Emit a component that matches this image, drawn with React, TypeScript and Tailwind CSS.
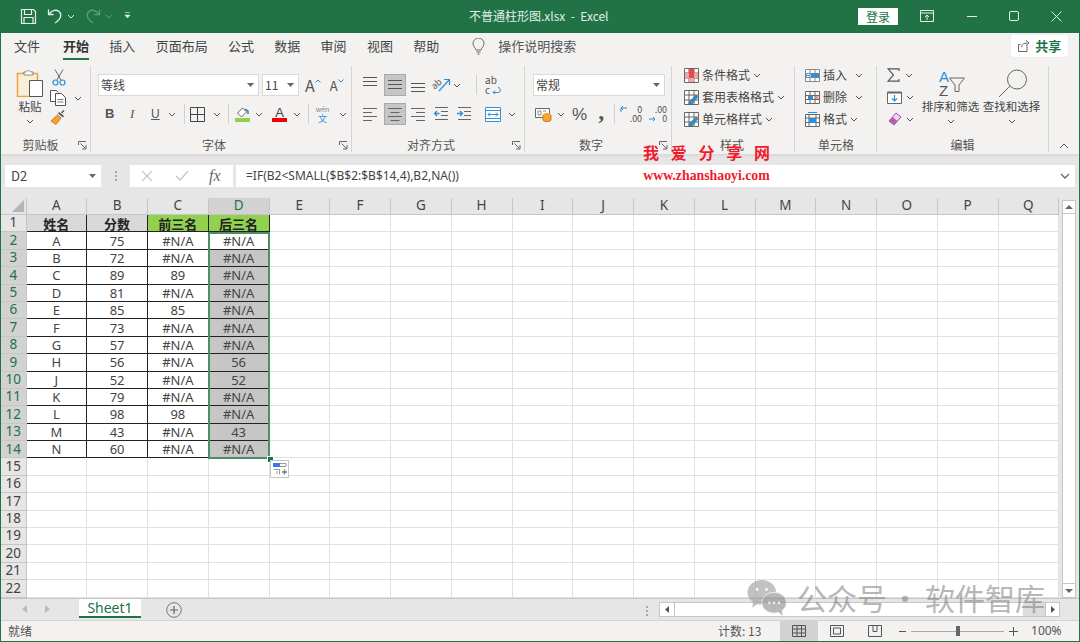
import type { ReactNode } from "react";

const cjk = "font-['Noto_Sans_CJK_SC',sans-serif]";

const columns = ["A", "B", "C", "D", "E", "F", "G", "H", "I", "J", "K", "L", "M", "N", "O", "P", "Q"];

const scores: string[][] = [
  ["A", "75", "#N/A", "#N/A"],
  ["B", "72", "#N/A", "#N/A"],
  ["C", "89", "89", "#N/A"],
  ["D", "81", "#N/A", "#N/A"],
  ["E", "85", "85", "#N/A"],
  ["F", "73", "#N/A", "#N/A"],
  ["G", "57", "#N/A", "#N/A"],
  ["H", "56", "#N/A", "56"],
  ["J", "52", "#N/A", "52"],
  ["K", "79", "#N/A", "#N/A"],
  ["L", "98", "98", "#N/A"],
  ["M", "43", "#N/A", "43"],
  ["N", "60", "#N/A", "#N/A"],
];

function Chevron({ className = "" }: { className?: string }) {
  return (
    <svg width="8" height="5" viewBox="0 0 8 5" className={`shrink-0 ${className}`}>
      <path d="M1 1l3 3 3-3" fill="none" stroke="#555" />
    </svg>
  );
}

function Caret() {
  return (
    <svg width="7" height="4" viewBox="0 0 7 4">
      <path d="M0 0h7L3.500 4z" fill="#666" />
    </svg>
  );
}

function Launcher() {
  return (
    <svg width="9" height="9" viewBox="0 0 9 9" className="shrink-0">
      <path d="M.5 4V.5H8M2.500 2.500l5 5M8 4v4H4" fill="none" stroke="#666" />
    </svg>
  );
}

function Sep({ className = "" }: { className?: string }) {
  return <div className={`w-px h-[20px] bg-[#d0d0d0] ${className}`} />;
}

function Group({ label, className, launcher, labelClass = "", children }: { label: string; className: string; launcher?: boolean; labelClass?: string; children: ReactNode }) {
  return (
    <div className={`h-[86px] shrink-0 flex flex-col border-r border-[#d4d4d4] ${className}`}>
      <div className="flex-1 min-h-0">{children}</div>
      <div className={`h-[14px] flex items-center justify-center relative text-[12px] leading-[14px] text-[#555] ${labelClass}`}>
        {label}
        {launcher && (
          <span className="absolute right-[3px] top-[3px] flex">
            <Launcher />
          </span>
        )}
      </div>
    </div>
  );
}

function Lines({ kind }: { kind: "left" | "center" | "right" }) {
  const rows = [3, 7, 11, 15];
  const long = 14;
  const short = 9;
  return (
    <svg width="16" height="18" viewBox="0 0 16 18" className="shrink-0">
      {rows.map((r, i) => {
        const w = i % 2 === 0 ? long : short;
        const x = kind === "left" ? 1 : kind === "right" ? 15 - w : 8 - w / 2;
        return <path key={r} d={`M${x} ${r + 0.5}h${w}`} stroke="#666" />;
      })}
    </svg>
  );
}

function VAlign({ top }: { top: number }) {
  return (
    <svg width="16" height="18" viewBox="0 0 16 18" className="shrink-0">
      {[0, 4, 8].map((d) => (
        <path key={d} d={`M1 ${top + d + 0.5}h14`} stroke="#555" />
      ))}
    </svg>
  );
}

function Indent({ flip }: { flip?: boolean }) {
  return (
    <svg width="16" height="16" viewBox="0 0 16 16" className="shrink-0">
      <path d="M2 1.500h13M8 5.500h7M8 9.500h7M2 13.500h13" stroke="#666" />
      <path d={flip ? "M1 7.500h5M4 5l2.500 2.500L4 10" : "M6.500 7.500h-5M4 5L1.500 7.500 4 10"} fill="none" stroke="#2b8fd8" strokeWidth="1.300" />
    </svg>
  );
}

function TitleBar() {
  return (
    <div className="h-[33px] shrink-0 bg-[#217346] flex items-center text-white pb-[1px]">
      <svg width="17" height="17" viewBox="0 0 17 17" className="ml-[19px]">
        <path d="M1.500 1.500h12l2 2v12h-14zM4.500 1.500v5h7v-5M4 15.500v-6h9v6" fill="none" stroke="#e4f0ea" strokeWidth="1.200" />
      </svg>
      <svg width="16" height="16" viewBox="0 0 16 16" className="ml-[10px]">
        <path d="M1.500 1.500v5h5M2 6.500C4 2.500 9 1 12 3.500S14.500 11 8 15" fill="none" stroke="#e4f0ea" strokeWidth="1.300" />
      </svg>
      <svg width="8" height="5" viewBox="0 0 8 5" className="ml-[4px]">
        <path d="M1 1l3 3 3-3" fill="none" stroke="#e4f0ea" />
      </svg>
      <svg width="16" height="16" viewBox="0 0 16 16" className="ml-[10px]">
        <path d="M14.500 1.500v5h-5M14 6.500C12 2.500 7 1 4 3.500S1.500 11 8 15" fill="none" stroke="#5f9c7d" strokeWidth="1.300" />
      </svg>
      <svg width="8" height="5" viewBox="0 0 8 5" className="ml-[4px]">
        <path d="M1 1l3 3 3-3" fill="none" stroke="#5f9c7d" />
      </svg>
      <svg width="7" height="8" viewBox="0 0 7 8" className="ml-[11px]">
        <path d="M1 .5h5M1 3h5L3.500 6z" fill="#e4f0ea" stroke="#e4f0ea" strokeWidth=".6" />
      </svg>
      <div className="ml-[338px] w-[140px] text-[12px] text-[#e1eee7] whitespace-pre">不普通柱形图.xlsx  -  Excel</div>
      <div className="ml-[249px] w-[40px] h-[17px] bg-white text-[#217346] text-[12px] leading-[17px] text-center">登录</div>
      <svg width="14" height="12" viewBox="0 0 14 12" className="ml-[22px]">
        <path d="M.5.500h13v11H.5zM1 3h12M7 10V5M5 7l2-2 2 2" fill="none" stroke="#e4f0ea" />
      </svg>
      <div className="ml-[33px] w-[10px] h-px bg-[#e4f0ea]" />
      <div className="ml-[32px] w-[10px] h-[10px] border border-[#e4f0ea] rounded-[2px]" />
      <svg width="11" height="11" viewBox="0 0 11 11" className="ml-[32px]">
        <path d="M.5.500l10 10M10.500.500l-10 10" stroke="#e4f0ea" />
      </svg>
    </div>
  );
}

function Tabs() {
  const rest = ["插入", "页面布局", "公式", "数据", "审阅", "视图", "帮助"];
  return (
    <div className="h-[29px] flex items-center text-[13px] text-[#444] pb-[3px]">
      <span className="ml-[13px]">文件</span>
      <span className="relative ml-[23px] font-bold text-[#333]">
        开始
        <span className="absolute left-0 right-0 top-[22px] h-[2px] bg-[#217346]" />
      </span>
      {rest.map((t) => (
        <span key={t} className="ml-[20.3px]">{t}</span>
      ))}
      <svg width="13" height="17" viewBox="0 0 13 17" className="ml-[33px]">
        <path d="M4 12c0-2-3-3-3-6.500a5.500 5.500 0 0 1 11 0c0 3.500-3 4.500-3 6.500zM4.500 14h4M5.500 16h2" fill="none" stroke="#666" />
      </svg>
      <span className="ml-[13px] text-[#555]">操作说明搜索</span>
      <div className="ml-[435px] w-[57px] h-[22px] bg-white rounded-[2px] flex items-center justify-center gap-[5px] shadow-[0_0_1px_#ccc]">
        <svg width="12" height="12" viewBox="0 0 12 12">
          <path d="M9 5.500v6H.500v-7h2M3.500 7c.5-3 3-4 6-4M8 .500l3 2.500-3 2.500" fill="none" stroke="#666" />
        </svg>
        <span className="text-[13px] font-bold text-[#217346]">共享</span>
      </div>
    </div>
  );
}

function ClipboardGroup() {
  return (
    <Group label="剪贴板" launcher className="w-[90px]" labelClass="pr-[10px]">
      <div className="flex">
        <div className="ml-[15px] w-[28px] flex flex-col items-center">
          <svg width="28" height="28" viewBox="0 0 28 28" className="mt-[3px] shrink-0">
            <path d="M1.500 4.500h6v-1h9v1h5v23h-20z" fill="#fbeed9" stroke="#eba33d" strokeWidth="1.500" />
            <path d="M8 5V3h2.500c.5-2 3.500-2 4 0H17v3H8z" fill="#fff" stroke="#888" />
            <path d="M13.500 11.500h13v16h-13z" fill="#fff" stroke="#555" />
          </svg>
          <div className="text-[11.5px] leading-[14px] mt-[2px] text-[#444] whitespace-nowrap">粘贴</div>
          <Chevron className="mt-[6px]" />
        </div>
        <div className="ml-[6px] flex flex-col">
          <svg width="14" height="17" viewBox="0 0 14 17" className="ml-[2px] mt-[3px]">
            <path d="M3 .500L9 11M11 .500L5 11" stroke="#666" fill="none" />
            <circle cx="3.500" cy="13.500" r="2.500" fill="none" stroke="#2b8fd8" strokeWidth="1.200" />
            <circle cx="10.500" cy="13.500" r="2.500" fill="none" stroke="#2b8fd8" strokeWidth="1.200" />
          </svg>
          <div className="flex items-center mt-[4px]">
            <svg width="17" height="16" viewBox="0 0 17 16">
              <path d="M5.500 11.500H.5v-11h6l1.500 2" fill="#fff" stroke="#555" />
              <path d="M5.500 3.500h6l4 4v8h-10z" fill="#fff" stroke="#555" />
              <path d="M7.500 9.500h6M7.500 12h6" stroke="#777" />
            </svg>
            <Chevron className="ml-[7px]" />
          </div>
          <svg width="16" height="16" viewBox="0 0 16 16" className="mt-[4px]">
            <path d="M9 2l5 4-1 1.500-5-4z" fill="#555" />
            <path d="M7.500 5l3.500 3L6 14.500 1 11z" fill="#f2a33a" stroke="#d6791a" />
            <path d="M11.500 3L14 .5" stroke="#555" strokeWidth="1.500" />
          </svg>
        </div>
      </div>
    </Group>
  );
}

function FontGroup() {
  return (
    <Group label="字体" launcher className="w-[261px]" labelClass="pr-[14px]">
      <div className="flex mt-[8px] h-[22px] ml-[7px]">
        <div className="w-[161px] bg-white border border-[#d9d9d9] flex items-center justify-between px-[2px] pr-[4px] text-[12px] text-[#444]">
          等线
          <Caret />
        </div>
        <div className="ml-[3px] w-[37px] bg-white border border-[#d9d9d9] flex items-center justify-between px-[2px] pr-[4px] text-[12px] text-[#444]">
          11
          <Caret />
        </div>
        <div className="ml-[6px] flex items-center text-[#555] text-[16px] leading-none">
          <span>A</span>
          <svg width="6" height="4" viewBox="0 0 6 4" className="-mt-[8px]"><path d="M.5 3.500L3 1l2.500 2.500" fill="none" stroke="#2b8fd8" /></svg>
          <span className="ml-[9px] text-[13px]">A</span>
          <svg width="6" height="4" viewBox="0 0 6 4" className="-mt-[8px]"><path d="M.5.500L3 3 5.500.5" fill="none" stroke="#2b8fd8" /></svg>
        </div>
      </div>
      <div className="flex items-center mt-[7px] h-[22px] text-[#555]">
        <span className="ml-[14px] w-[8px] text-[13px] font-bold font-['Liberation_Sans',sans-serif]">B</span>
        <span className="ml-[17px] w-[5px] text-[13px] italic font-['Liberation_Serif',serif]">I</span>
        <span className="ml-[16px] w-[8px] text-[12px] underline font-['Liberation_Sans',sans-serif]">U</span>
        <Chevron className="ml-[9px]" />
        <Sep className="ml-[8px]" />
        <svg width="15" height="15" viewBox="0 0 15 15" className="ml-[5px]">
          <path d="M.5.500h14v14H.5zM7.500 1v13M1 7.500h13" fill="none" stroke="#444" />
        </svg>
        <Chevron className="ml-[8px]" />
        <Sep className="ml-[7px]" />
        <div className="ml-[6px] w-[15px] flex flex-col items-center">
          <svg width="14" height="11" viewBox="0 0 14 11">
            <path d="M6.500 1L1.500 6l4 4 5-5z" fill="#fff" stroke="#666" />
            <path d="M9 2l3 2v3" fill="none" stroke="#1f6fb5" strokeWidth="1.400" />
          </svg>
          <div className="w-[15px] h-[4px] bg-[#92d050]" />
        </div>
        <Chevron className="ml-[5px]" />
        <div className="ml-[9px] w-[15px] flex flex-col items-center text-[13px] leading-[11px] text-[#444]">
          <span className="font-['Liberation_Sans',sans-serif] h-[11px]">A</span>
          <div className="w-[15px] h-[4px] bg-[#f00000]" />
        </div>
        <Chevron className="ml-[6px]" />
        <Sep className="ml-[7px]" />
        <div className="ml-[6px] w-[15px] flex flex-col items-center leading-[9px]">
          <span className="text-[7px] text-[#888]">wén</span>
          <span className="text-[9px] text-[#2b8fd8]">文</span>
        </div>
        <Chevron className="ml-[9px]" />
      </div>
    </Group>
  );
}

function AlignGroup() {
  return (
    <Group label="对齐方式" launcher className="w-[173px]" labelClass="pr-[14px]">
      <div className="flex items-center mt-[8px] h-[22px]">
        <div className="ml-[10px] w-[16px] flex"><VAlign top={1} /></div>
        <div className="ml-[6px] w-[22px] h-[22px] bg-[#c6c6c6] border border-[#aaa] flex items-center justify-center"><VAlign top={4} /></div>
        <div className="ml-[4px] w-[16px] flex"><VAlign top={7} /></div>
        <svg width="20" height="18" viewBox="0 0 20 18" className="ml-[5px] overflow-visible">
          <text x="1" y="11" fontSize="9" fill="#555" transform="rotate(-40 6 9)">ab</text>
          <path d="M8 15L18 4M13 3.500h5.500V9" fill="none" stroke="#2b8fd8" strokeWidth="1.200" />
        </svg>
        <Chevron className="ml-[2px]" />
        <Sep className="ml-[15px]" />
        <div className="ml-[8px] h-[20px] flex flex-col items-start text-[10px] leading-[10px] text-[#555]">
          <span>ab</span>
          <span className="flex items-center">
            c
            <svg width="11" height="8" viewBox="0 0 11 8">
              <path d="M3 6.500h5c3 0 3-5 0-5M3 6.500L5 4.500M3 6.500l2 1.500" fill="none" stroke="#2b8fd8" />
            </svg>
          </span>
        </div>
      </div>
      <div className="flex items-center mt-[7px] h-[22px]">
        <div className="ml-[10px] flex"><Lines kind="left" /></div>
        <div className="ml-[6px] w-[22px] h-[22px] bg-[#c6c6c6] border border-[#aaa] flex items-center justify-center"><Lines kind="center" /></div>
        <div className="ml-[4px] flex"><Lines kind="right" /></div>
        <div className="ml-[7px] flex"><Indent /></div>
        <div className="ml-[7px] flex"><Indent flip /></div>
        <svg width="16" height="15" viewBox="0 0 16 15" className="ml-[13px]">
          <path d="M.5.500h15v14H.5zM1 3.500h14M1 11.500h14" fill="#fff" stroke="#3a8fd0" />
          <path d="M3 7.500h10M5 5.500l-2 2 2 2M11 5.500l2 2-2 2" fill="none" stroke="#2b8fd8" />
        </svg>
        <Chevron className="ml-[7px]" />
      </div>
    </Group>
  );
}

function NumberGroup() {
  return (
    <Group label="数字" launcher className="w-[147px]" labelClass="pr-[14px]">
      <div className="ml-[8px] mt-[8px] w-[132px] h-[22px] bg-white border border-[#d9d9d9] flex items-center justify-between px-[2px] pr-[4px] text-[12px] text-[#444]">
        常规
        <Caret />
      </div>
      <div className="flex items-center mt-[7px] h-[22px] text-[#555]">
        <svg width="17" height="15" viewBox="0 0 17 15" className="ml-[10px]">
          <path d="M.5 1.500h14v9H.5z" fill="#fff" stroke="#666" />
          <path d="M3 4h3v4H3zM8 4h3" fill="none" stroke="#888" />
          <ellipse cx="12" cy="8" rx="4" ry="2" fill="#f2a33a" />
          <path d="M8 8v5c0 2 8 2 8 0V8" fill="#f2a33a" stroke="#d6791a" />
        </svg>
        <Chevron className="ml-[5px]" />
        <span className="ml-[7px] text-[17px] leading-none font-['Liberation_Sans',sans-serif]">%</span>
        <span className="ml-[11px] text-[24px] leading-none font-bold font-['Liberation_Serif',serif] -mt-[6px]">,</span>
        <Sep className="ml-[10px]" />
        <div className="ml-[5px] relative w-[22px] h-[18px] text-[9px] leading-[9px] text-[#555] text-right">
          <div>0</div>
          <div>.00</div>
          <svg width="8" height="8" viewBox="0 0 8 8" className="absolute left-0 top-0">
            <path d="M7 3H1M3 1L1 3l2 2M1 3v4" fill="none" stroke="#2b8fd8" />
          </svg>
        </div>
        <div className="ml-[3px] relative w-[22px] h-[18px] text-[9px] leading-[9px] text-[#555] text-right">
          <div>.00</div>
          <div>0</div>
          <svg width="8" height="8" viewBox="0 0 8 8" className="absolute left-[3px] bottom-0">
            <path d="M1 4h6M5 2l2 2-2 2" fill="none" stroke="#2b8fd8" />
          </svg>
        </div>
      </div>
    </Group>
  );
}

function TableIcon({ kind }: { kind: "cond" | "table" | "cell" }) {
  return (
    <svg width="15" height="15" viewBox="0 0 15 15" className="shrink-0">
      <path d="M.5.500h14v14H.5zM5 1v13M10 1v13M1 5h13M1 10h13" fill="#fff" stroke="#666" />
      {kind === "cond" ? (
        <>
          <path d="M5 1h5v4H5zM5 5h5v5H5z" fill="#e8484f" />
          <path d="M1 5h4v5H1zM10 5h4v5h-4zM5 10h5v4H5z" fill="#f5a3a6" />
        </>
      ) : (
        <path d="M5 12L12 5l2 2-6 7H5z" fill="#2b8fd8" stroke="#666" strokeWidth=".6" />
      )}
    </svg>
  );
}

function StylesGroup() {
  const rows: [string, "cond" | "table" | "cell"][] = [
    ["条件格式", "cond"],
    ["套用表格格式", "table"],
    ["单元格样式", "cell"],
  ];
  return (
    <Group label="样式" className="w-[123px]" labelClass="pr-[2px]">
      <div className="-mt-[1px] flex flex-col gap-[2px] pl-[12px]">
        {rows.map(([t, k]) => (
          <div key={t} className="h-[20px] flex items-center text-[12px] text-[#444]">
            <TableIcon kind={k} />
            <span className="ml-[3px]">{t}</span>
            <Chevron className="ml-[3px]" />
          </div>
        ))}
      </div>
    </Group>
  );
}

function CellsGroup() {
  return (
    <Group label="单元格" className="w-[82px]" labelClass="pl-[1px]">
      <div className="-mt-[1px] flex flex-col gap-[2px] pl-[10px] text-[12px] text-[#444]">
        <div className="h-[20px] flex items-center">
          <svg width="15" height="13" viewBox="0 0 15 13" className="shrink-0">
            <path d="M.5.500h14v12H.5zM5 1v11M10 1v11M1 4.500h13M1 8.500h13" fill="#fff" stroke="#888" />
            <path d="M6 4.500h8v4H6z" fill="#2b8fd8" />
            <path d="M5 6.500H0M2 4.500l-2 2 2 2" fill="none" stroke="#2b8fd8" />
          </svg>
          <span className="ml-[3px]">插入</span>
          <Chevron className="ml-[8px]" />
        </div>
        <div className="h-[20px] flex items-center">
          <svg width="15" height="13" viewBox="0 0 15 13" className="shrink-0">
            <path d="M.5.500h14v12H.5zM5 1v11M10 1v11M1 4.500h13M1 8.500h13" fill="#fff" stroke="#666" />
            <path d="M3 4.500h5v4H3z" fill="#2b8fd8" />
            <path d="M10 4.500l4 4M14 4.500l-4 4" stroke="#e8484f" />
          </svg>
          <span className="ml-[3px]">删除</span>
          <Chevron className="ml-[8px]" />
        </div>
        <div className="h-[20px] flex items-center">
          <svg width="15" height="15" viewBox="0 0 15 15" className="shrink-0">
            <path d="M.5 2.500h14v12H.5zM1 6h13M1 10.500h13M4 3v11M11 3v11" fill="#fff" stroke="#666" />
            <path d="M4 6h7v5H4z" fill="#2b8fd8" />
            <path d="M3 .500h9" stroke="#2b8fd8" />
          </svg>
          <span className="ml-[3px]">格式</span>
          <Chevron className="ml-[3px]" />
        </div>
      </div>
    </Group>
  );
}

function EditGroup() {
  return (
    <Group label="编辑" className="w-[172px]">
      <div className="flex">
        <div className="-mt-[1px] flex flex-col gap-[2px] pl-[10px] w-[43px]">
          <div className="h-[20px] flex items-center">
            <svg width="13" height="14" viewBox="0 0 13 14">
              <path d="M12 3V.800H1L6.500 7 1 13.200h11V11" fill="none" stroke="#555" strokeWidth="1.200" />
            </svg>
            <Chevron className="ml-[5px]" />
          </div>
          <div className="h-[20px] flex items-center">
            <svg width="15" height="13" viewBox="0 0 15 13">
              <path d="M.5 1h14v11.500H.5z" fill="#fff" stroke="#666" />
              <path d="M.5 1h14v1.500H.5z" fill="#666" />
              <path d="M7.500 4v6M5 7.500l2.500 2.500L10 7.500" fill="none" stroke="#2b8fd8" strokeWidth="1.200" />
            </svg>
            <Chevron className="ml-[4px]" />
          </div>
          <div className="h-[20px] flex items-center">
            <svg width="15" height="14" viewBox="0 0 15 14">
              <path d="M9 1l5 4-7 8-5-4z" fill="#f1d6ef" stroke="#a64ca6" />
              <path d="M2 9l3.500-4 5 4L7 13z" fill="#b35fb3" />
            </svg>
            <Chevron className="ml-[4px]" />
          </div>
        </div>
        <div className="w-[61px] flex flex-col items-center">
          <div className="h-[28px] mt-[4px] flex items-center text-[15px] leading-[14px] ml-[3px]">
            <div className="flex flex-col font-['Liberation_Sans',sans-serif]">
              <span className="text-[#2b8fd8]">A</span>
              <span className="text-[#555]">Z</span>
            </div>
            <svg width="16" height="17" viewBox="0 0 16 17" className="mt-[1px]">
              <path d="M.5 2h15l-5.500 7v6.500H6V9z" fill="none" stroke="#666" />
            </svg>
          </div>
          <div className="text-[11.5px] leading-[14px] mt-[1px] text-[#444] whitespace-nowrap">排序和筛选</div>
          <Chevron className="mt-[6px]" />
        </div>
        <div className="w-[61px] flex flex-col items-center">
          <svg width="30" height="30" viewBox="0 0 30 30" className="mt-[3px] ml-[2px] shrink-0">
            <circle cx="19" cy="10.500" r="9.500" fill="none" stroke="#666" />
            <path d="M12 17L1 28" stroke="#666" />
          </svg>
          <div className="text-[11.5px] leading-[14px] text-[#444] whitespace-nowrap">查找和选择</div>
          <Chevron className="mt-[6px]" />
        </div>
      </div>
    </Group>
  );
}

function Ribbon() {
  return (
    <div className="h-[121px] shrink-0 bg-[#f3f2f1] relative">
      <Tabs />
      <div className="flex pt-[4px]">
        <ClipboardGroup />
        <FontGroup />
        <AlignGroup />
        <NumberGroup />
        <StylesGroup />
        <CellsGroup />
        <EditGroup />
        <div className="flex-1 flex justify-center items-end pb-[3px]">
          <svg width="10" height="6" viewBox="0 0 10 6"><path d="M1 5l4-4 4 4" fill="none" stroke="#555" /></svg>
        </div>
      </div>
    </div>
  );
}

function FormulaBar() {
  return (
    <div className="h-[44px] shrink-0 bg-[linear-gradient(#d8d8d8,#e6e6e6_4px)] flex items-center pl-[4px]">
      <div className="w-[96px] h-[22px] bg-white flex items-center justify-between pl-[6px] pr-[5px] text-[13px] text-[#444]">
        D2
        <Caret />
      </div>
      <div className="ml-[14px] w-[3px] h-[10px] flex flex-col justify-between">
        <span className="w-[2px] h-[2px] bg-[#aaa]" />
        <span className="w-[2px] h-[2px] bg-[#aaa]" />
        <span className="w-[2px] h-[2px] bg-[#aaa]" />
      </div>
      <div className="ml-[12px] w-[103px] h-[22px] bg-white flex items-center">
        <svg width="12" height="12" viewBox="0 0 12 12" className="ml-[11px]">
          <path d="M1 1l10 10M11 1L1 11" stroke="#c8c8c8" strokeWidth="1.300" />
        </svg>
        <svg width="14" height="12" viewBox="0 0 14 12" className="ml-[22px]">
          <path d="M1 6l4 4 8-9" fill="none" stroke="#c8c8c8" strokeWidth="1.500" />
        </svg>
        <span className="ml-[20px] text-[16px] italic text-[#666] font-['Liberation_Serif',serif]">fx</span>
      </div>
      <div className="ml-[3px] w-[839px] h-[22px] bg-white flex items-center justify-between pl-[10px] pr-[5px] text-[12px] text-[#444] font-['Noto_Sans',sans-serif]">
        {"=IF(B2<SMALL($B$2:$B$14,4),B2,NA())"}
        <svg width="10" height="6" viewBox="0 0 10 6"><path d="M1 1l4 4 4-4" fill="none" stroke="#666" strokeWidth="1.300" /></svg>
      </div>
    </div>
  );
}

function Sheet() {
  const rows = Array.from({ length: 22 }, (_, i) => i + 1);
  return (
    <div className="flex-1 min-h-0 flex bg-[#e6e6e6] relative">
      <div className="relative w-[1058px] h-[400px] shrink-0 bg-white grid grid-cols-[25.500px_repeat(17,60.750px)] grid-rows-[17px_repeat(22,17.400px)] overflow-hidden text-[13px] text-[#444] font-['Noto_Sans',sans-serif]">
        <div className="bg-[#e6e6e6] border-r border-b border-[#c6c6c6] flex items-end justify-end p-[2px]">
          <svg width="12" height="12" viewBox="0 0 12 12"><path d="M12 0v12H0z" fill="#b5b5b5" /></svg>
        </div>
        {columns.map((c) => (
          <div key={c} className={`border-r border-b border-[#c6c6c6] text-[13.500px] flex items-center justify-center leading-none ${c === "D" ? "bg-[#d2d2d2] text-[#217346]" : "bg-[#e6e6e6]"}`}>
            {c}
          </div>
        ))}
        {rows.map((r) => {
          const data = r >= 2 && r <= 14 ? scores[r - 2] : null;
          return [
            <div key={`h${r}`} className={`border-r border-b border-[#c6c6c6] text-[13.500px] flex items-center justify-center leading-none ${data ? "bg-[#d2d2d2] text-[#217346]" : "bg-[#e6e6e6]"}`}>
              {r}
            </div>,
            ...columns.map((c, ci) => {
              if (r === 1 && ci < 4) {
                const names = ["姓名", "分数", "前三名", "后三名"];
                return (
                  <div key={c + r} className={`border-r border-b border-[#222] text-[#222] flex items-center justify-center font-bold leading-none ${cjk} ${ci < 2 ? "bg-[#d9d9d9]" : "bg-[#92d050]"}`}>
                    {names[ci]}
                  </div>
                );
              }
              if (data && ci < 4) {
                const shaded = ci === 3 && r > 2;
                return (
                  <div key={c + r} className={`border-r border-b border-[#222] pt-px flex items-center justify-center leading-none ${shaded ? "bg-[#c6c6c6]" : "bg-white"}`}>
                    {data[ci]}
                  </div>
                );
              }
              return <div key={c + r} className="border-r border-b border-[#e1e1e1]" />;
            }),
          ];
        })}
        {/* selection rectangle over D2:D14 */}
        <div className="absolute left-[207px] top-[34px] w-[62px] h-[227px] border-2 border-[#4b8f68] pointer-events-none" />
        <div className="absolute left-[266px] top-[258px] w-[5px] h-[5px] bg-[#217346] border border-white box-content" />
        <div className="absolute left-[269px] top-[262px] w-[19px] h-[18px] bg-white border border-[#c6c6c6] flex items-center justify-center">
          <svg width="14" height="12" viewBox="0 0 14 12">
            <path d="M0 0h7v4H0z" fill="#3b78e7" />
            <path d="M7 .5h6v3H7M.5 6.500h6v5M4 8v3" fill="none" stroke="#999" />
            <path d="M9 9h5M11.500 6.500v5" stroke="#777" strokeWidth="1.300" />
          </svg>
        </div>
      </div>
      <div className="ml-[3px] mt-[2px] w-[14px] h-[398px] bg-white border border-[#c6c6c6] flex flex-col justify-between">
        <div className="h-[13px] flex items-center justify-center border-b border-[#c6c6c6]">
          <svg width="8" height="4" viewBox="0 0 8 4"><path d="M0 4h8L4 0z" fill="#666" /></svg>
        </div>
        <div className="h-[14px] flex items-center justify-center border-t border-[#c6c6c6]">
          <svg width="8" height="4" viewBox="0 0 8 4"><path d="M0 0h8L4 4z" fill="#666" /></svg>
        </div>
      </div>
    </div>
  );
}

function SheetTabs() {
  return (
    <div className="h-[22px] shrink-0 bg-[#e6e6e6] flex items-start border-t border-[#c6c6c6]">
      <svg width="6" height="8" viewBox="0 0 6 8" className="ml-[21px] mt-[6px]"><path d="M5 0v8L0 4z" fill="#bbb" /></svg>
      <svg width="6" height="8" viewBox="0 0 6 8" className="ml-[16px] mt-[6px]"><path d="M1 0v8l5-4z" fill="#bbb" /></svg>
      <div className="ml-[29px] w-[62px] h-[19px] bg-white border-b-2 border-[#217346] text-[14px] leading-[17px] text-[#217346] text-center font-['Noto_Sans',sans-serif]">Sheet1</div>
      <svg width="16" height="16" viewBox="0 0 16 16" className="ml-[25px] mt-[3px]">
        <circle cx="8" cy="8" r="7.300" fill="none" stroke="#777" />
        <path d="M8 4v8M4 8h8" stroke="#666" strokeWidth="1.200" />
      </svg>
      <div className="ml-[464px] mt-[7px] w-[2px] h-[10px] flex flex-col justify-between">
        <span className="w-[2px] h-[2px] bg-[#aaa]" />
        <span className="w-[2px] h-[2px] bg-[#aaa]" />
        <span className="w-[2px] h-[2px] bg-[#aaa]" />
      </div>
      <div className="ml-[11px] mt-[3px] w-[401px] h-[15px] flex border border-[#c6c6c6]">
        <div className="w-[15px] bg-white flex items-center justify-center border-r border-[#c6c6c6]">
          <svg width="4" height="7" viewBox="0 0 4 7"><path d="M4 0v7L0 3.500z" fill="#555" /></svg>
        </div>
        <div className="w-[348px] bg-white" />
        <div className="flex-1 bg-[#dcdcdc]" />
        <div className="w-[14px] bg-white flex items-center justify-center border-l border-[#c6c6c6]">
          <svg width="4" height="7" viewBox="0 0 4 7"><path d="M0 0v7l4-3.500z" fill="#555" /></svg>
        </div>
      </div>
    </div>
  );
}

function StatusBar() {
  return (
    <div className="h-[21px] shrink-0 bg-[#f3f2f1] flex items-center text-[12px] text-[#555] border-t border-[#d4d4d4]">
      <span className="ml-[7px]">就绪</span>
      <span className="ml-[686px] w-[43px] whitespace-nowrap">计数: 13</span>
      <div className="ml-[19px] w-[38px] h-[20px] bg-[#d2d2d2] flex items-center justify-center">
        <svg width="14" height="12" viewBox="0 0 14 12">
          <path d="M.5.500h13v11H.5zM5 1v10M9.500 1v10M1 4h12M1 8h12" fill="none" stroke="#555" />
        </svg>
      </div>
      <svg width="14" height="12" viewBox="0 0 14 12" className="ml-[12px]">
        <path d="M.5.500h13v11H.5zM3.500 3h7v6h-7z" fill="none" stroke="#555" />
      </svg>
      <svg width="14" height="12" viewBox="0 0 14 12" className="ml-[24px]">
        <path d="M.5 11.500V.500h13v11zM5 1v5.500h4V1" fill="none" stroke="#555" />
      </svg>
      <div className="ml-[17px] w-[7px] h-px bg-[#555]" />
      <div className="ml-[5px] w-[93px] h-[10px] flex items-center justify-center relative">
        <div className="w-full h-px bg-[#aaa]" />
        <div className="absolute w-[4px] h-[10px] bg-[#666]" />
      </div>
      <svg width="9" height="9" viewBox="0 0 9 9" className="ml-[5px]"><path d="M4.500 0v9M0 4.500h9" stroke="#555" /></svg>
      <span className="ml-[13px] font-['Noto_Sans',sans-serif]">100%</span>
    </div>
  );
}

export default function App() {
  return (
    <div className={`relative w-[1080px] h-[642px] overflow-hidden flex flex-col border-x border-b border-[#217346] bg-white ${cjk}`}>
      <TitleBar />
      <Ribbon />
      <FormulaBar />
      <Sheet />
      <SheetTabs />
      <StatusBar />

      {/* site stamp pasted over the screenshot */}
      <div className="absolute left-[642px] top-[143px] w-[127px] font-['Liberation_Serif',serif] font-bold text-[#f01c2c] text-center">
        <div className="flex justify-between text-[16px] leading-[18px] font-['Noto_Sans_CJK_SC',sans-serif]">
          <span>我</span><span>爱</span><span>分</span><span>享</span><span>网</span>
        </div>
        <div className="text-[13.800px] leading-[14px] mt-[8px] whitespace-nowrap">www.zhanshaoyi.com</div>
      </div>

      {/* wechat watermark */}
      <div className="absolute left-[744px] top-[578px] flex items-center opacity-60 text-[#888] pointer-events-none">
        <svg width="43" height="38" viewBox="0 0 44 40">
          <ellipse cx="17" cy="15" rx="15" ry="13" fill="#9a9a9a" />
          <path d="M8 24l-1 7 8-5z" fill="#9a9a9a" />
          <ellipse cx="30" cy="26" rx="13" ry="11" fill="#8a8a8a" stroke="#e6e6e6" />
          <path d="M34 35l5 5-1-7z" fill="#8a8a8a" />
          <circle cx="12" cy="12" r="1.500" fill="#fff" />
          <circle cx="22" cy="12" r="1.500" fill="#fff" />
          <circle cx="25" cy="26" r="1.300" fill="#fff" />
          <circle cx="30" cy="26" r="1.300" fill="#fff" />
          <circle cx="35" cy="26" r="1.300" fill="#fff" />
        </svg>
        <span className="ml-[9px] text-[30px] leading-none whitespace-nowrap">公众号</span>
        <span className="ml-[3px] text-[30px] leading-none">·</span>
        <span className="ml-[5px] text-[30px] leading-none whitespace-nowrap">软件智库</span>
      </div>
    </div>
  );
}
